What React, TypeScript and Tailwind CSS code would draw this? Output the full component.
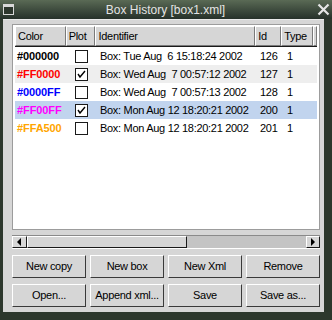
import React from "react";

const rows = [
  { color: "#000000", text: "text-[#000000]", plot: false, id: "Box: Tue Aug \u00a06 15:18:24 2002", num: "126", bg: "bg-white" },
  { color: "#FF0000", text: "text-[#ff0000]", plot: true, id: "Box: Wed Aug \u00a07 00:57:12 2002", num: "127", bg: "bg-[#eeeeee]" },
  { color: "#0000FF", text: "text-[#0000ff]", plot: false, id: "Box: Wed Aug \u00a07 00:57:13 2002", num: "128", bg: "bg-white" },
  { color: "#FF00FF", text: "text-[#ff00ff]", plot: true, id: "Box: Mon Aug 12 18:20:21 2002", num: "200", bg: "bg-[#c1d4ee]" },
  { color: "#FFA500", text: "text-[#ffa500]", plot: false, id: "Box: Mon Aug 12 18:20:21 2002", num: "201", bg: "bg-white" },
];

const buttons = ["New copy", "New box", "New Xml", "Remove", "Open...", "Append xml...", "Save", "Save as..."];

function HeaderCell({ w, label }: { w: string; label: string }) {
  return (
    <div className={`${w} h-full flex items-center pl-[2px] bg-[#d6d6d6] border-t border-l border-white border-r border-b border-r-[#7a7a7a] border-b-[#7a7a7a] overflow-hidden whitespace-nowrap`}>
      {label}
    </div>
  );
}

function Check({ on }: { on: boolean }) {
  return (
    <div className="w-[13px] h-[13px] border border-[#1a1a1a] bg-white flex items-center justify-center">
      {on && (
        <svg width="11" height="11" viewBox="0 0 11 11">
          <polyline points="2,5 4,8 9,2" fill="none" stroke="#000" strokeWidth="1.4" />
        </svg>
      )}
    </div>
  );
}

export default function App() {
  return (
    <div className="w-[332px] h-[320px] bg-[#2c372c] flex flex-col font-['Liberation_Sans',Arial,sans-serif] text-[11px] tracking-[-0.3px] text-black">
      {/* title bar */}
      <div className="h-[19px] flex items-center px-[3px] bg-gradient-to-b from-[#5a6a55] to-[#26312a] shrink-0">
        <div className="w-[11px] h-[11px] border border-[#d8d8d8] border-t-[3px] bg-[#2c362c]" />
        <div className="flex-1 text-center text-[12px] tracking-normal text-[#e4e4e4]">Box History [box1.xml]</div>
        <svg width="13" height="13" viewBox="0 0 13 13" className="mr-[-1px]">
          <path d="M1.5 1.5 L11.5 11.5 M11.5 1.5 L1.5 11.5" stroke="#e6e6e6" strokeWidth="2.2" />
        </svg>
      </div>

      {/* body */}
      <div className="ml-[3px] w-[321px] h-[293px] bg-[#d6d6d6] border-t border-[#eaeaea] pt-[4px] pl-[9px] pr-[4px] flex flex-col">
        {/* table */}
        <div className="w-[308px] h-[206px] border border-[#9c9c9c] bg-white pt-[1px] pl-[2px] pr-[2px] flex flex-col">
          <div className="h-[21px] flex border-b border-[#1a1a1a]">
            <HeaderCell w="w-[51px]" label="Color" />
            <HeaderCell w="w-[30px]" label="Plot" />
            <HeaderCell w="w-[161px]" label="Identifier" />
            <HeaderCell w="w-[26px]" label="Id" />
            <HeaderCell w="w-[32px]" label="Type" />
            <HeaderCell w="w-[3px]" label="" />
          </div>
          {rows.map((r) => (
            <div key={r.num} className={`h-[18px] flex items-center ${r.bg}`}>
              <div className={`w-[51px] pl-[2px] font-bold tracking-[-0.1px] ${r.text}`}>{r.color}</div>
              <div className="w-[30px] flex justify-center">
                <Check on={r.plot} />
              </div>
              <div className="w-[161px] pl-[4px] whitespace-nowrap">{r.id}</div>
              <div className="w-[26px] pl-[3px]">{r.num}</div>
              <div className="w-[32px] pl-[4px]">1</div>
            </div>
          ))}
        </div>

        {/* scrollbar */}
        <div className="mt-[5px] w-[308px] h-[14px] flex bg-[#c4c4c4] border-t border-[#8a8a8a] border-b border-b-white">
          <div className="w-[15px] h-full bg-[#d6d6d6] border-t border-l border-white border-r border-b border-r-[#1a1a1a] border-b-[#1a1a1a] flex items-center justify-center">
            <svg width="5" height="8" viewBox="0 0 5 8"><polygon points="4,0 4,8 0,4" fill="#000" /></svg>
          </div>
          <div className="w-[160px] h-full bg-[#d6d6d6] border-t border-l border-white border-r border-b border-r-[#1a1a1a] border-b-[#1a1a1a]" />
          <div className="flex-1" />
          <div className="w-[14px] h-full bg-[#d6d6d6] border-t border-l border-white border-r border-b border-r-[#1a1a1a] border-b-[#1a1a1a] flex items-center justify-center">
            <svg width="5" height="8" viewBox="0 0 5 8"><polygon points="0,0 0,8 4,4" fill="#000" /></svg>
          </div>
        </div>

        {/* buttons */}
        <div className="mt-[6px] w-[308px] grid grid-cols-4 gap-x-[4px] gap-y-[6px]">
          {buttons.map((b) => (
            <div key={b} className="h-[23px] flex items-center justify-center bg-[#d6d6d6] border-t border-l border-white border-r border-b border-r-[#3a3a3a] border-b-[#3a3a3a] whitespace-nowrap">
              {b}
            </div>
          ))}
        </div>
      </div>
    </div>
  );
}
